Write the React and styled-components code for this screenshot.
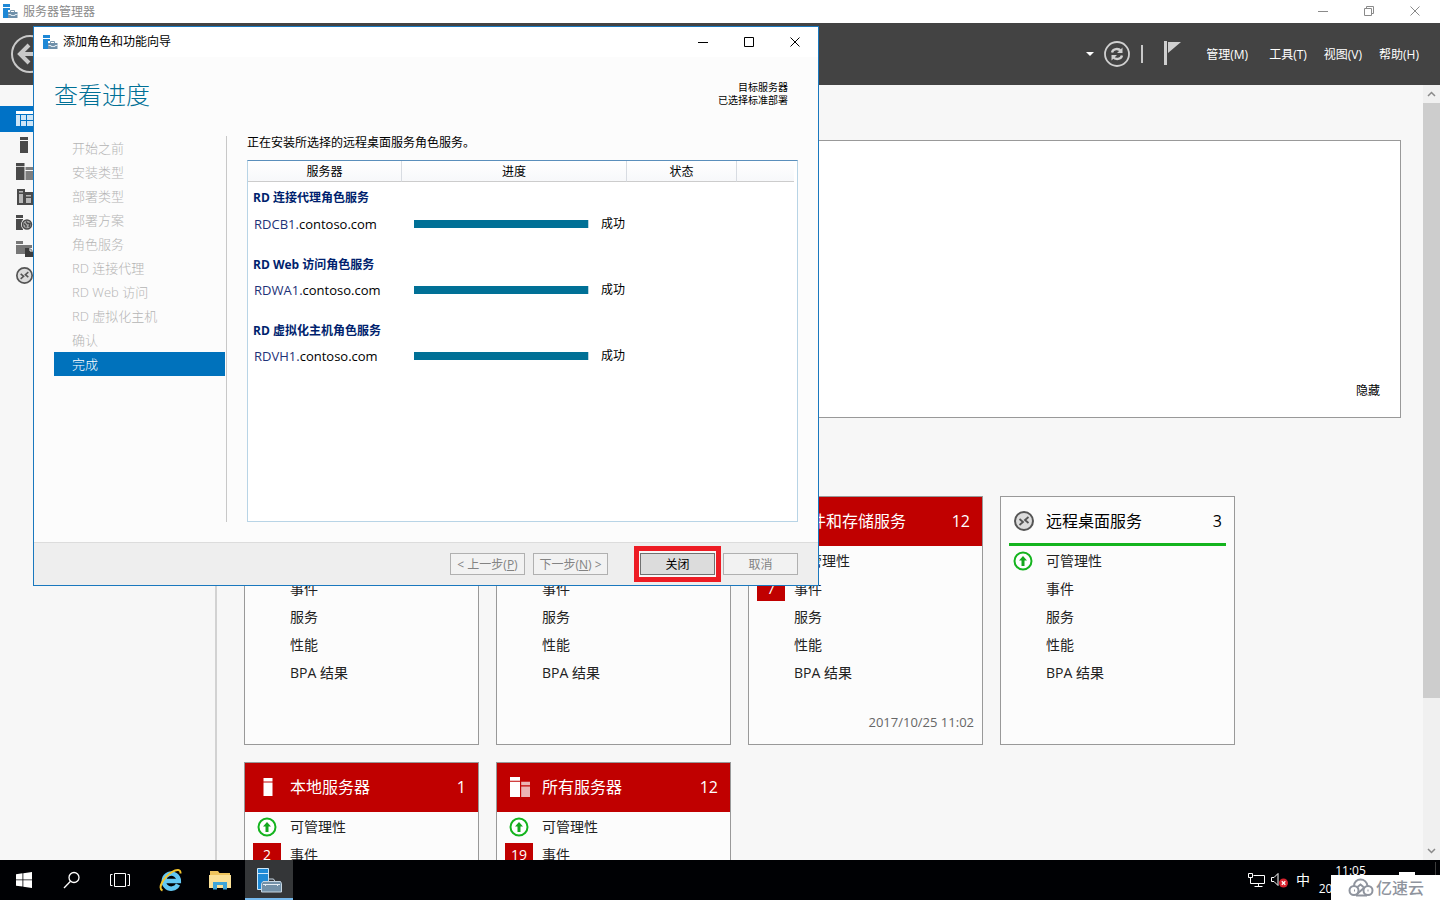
import React from 'react';
import styled, { createGlobalStyle } from 'styled-components';

const GlobalStyle = createGlobalStyle`
  * {
    box-sizing: border-box;
  }

  body {
    margin: 0;
    font-family: "Open Sans", "Noto Sans CJK SC", sans-serif;
    font-size: 12px;
    line-height: 16px;
    color: #000;
  }

  button {
    font: inherit;
    color: inherit;
    padding: 0;
    border: 0;
    background: none;
    white-space: nowrap;
  }

  svg {
    display: block;
    flex: none;
  }
`;

const Desktop = styled.div`
  position: relative;
  display: flex;
  flex-direction: column;
  height: 100vh;
  overflow: hidden;
  background: #f7f7f7;
`;

/* ---------- window chrome ---------- */

const TitleBar = styled.header`
  display: flex;
  align-items: center;
  gap: 5px;
  flex: none;
  height: ${(p) => p.$height}px;
  padding: ${(p) => p.$padding};
  background: #fff;
  color: ${(p) => p.$color};
`;

const TitleText = styled.span`
  flex: 1;
`;

const CaptionButton = styled.button`
  display: flex;
  align-items: center;
  justify-content: center;
  width: 46px;
  height: 100%;
  margin-left: -5px;
`;

const ManagerHeader = styled.div`
  display: flex;
  align-items: center;
  justify-content: space-between;
  flex: none;
  height: 62px;
  padding: 0 21px 0 11px;
  background: #434343;
  color: #fff;
`;

const HeaderTools = styled.div`
  display: flex;
  align-items: center;
`;

const ToolButton = styled.button`
  margin-right: ${(p) => p.$after}px;
`;

const Separator = styled.span`
  width: 2px;
  height: 18px;
  margin-right: 21px;
  background: #c8c8c8;
`;

const Menu = styled.nav`
  display: flex;
  gap: 17px;
  padding-top: 2px;

  button:first-child {
    margin-right: 4px;
  }
`;

/* ---------- server manager body ---------- */

const ManagerBody = styled.div`
  display: flex;
  flex: 1;
  min-height: 0;
`;

const Rail = styled.nav`
  flex: none;
  width: 217px;
  padding-top: 21px;
  border-right: 2px solid #d2d2d2;
`;

const RailItem = styled.button`
  display: flex;
  align-items: center;
  width: 100%;
  height: 26px;
  padding-left: 16px;
  background: ${(p) => (p.$active ? '#0072c6' : 'transparent')};
`;

const Dashboard = styled.main`
  flex: 1;
  min-width: 0;
  padding: 55px 22px 0 27px;
  overflow: hidden;
`;

const WelcomePanel = styled.section`
  display: flex;
  align-items: flex-end;
  justify-content: flex-end;
  min-height: 278px;
  padding: 0 20px 18px;
  margin-bottom: 78px;
  border: 1px solid #999;
  background: #fff;
`;

const Tiles = styled.div`
  display: grid;
  grid-template-columns: repeat(auto-fill, 235px);
  gap: 17px;
`;

const Tile = styled.article`
  display: flex;
  flex-direction: column;
  min-height: 249px;
  border: 1px solid #999;
  background: #fcfcfc;
`;

const TileHead = styled.h2`
  display: flex;
  align-items: center;
  gap: 8px;
  height: 49px;
  margin: 0;
  padding: 0 12px 2px 9px;
  font-size: 16px;
  font-weight: 400;
  line-height: 24px;
  background: ${(p) => (p.$alert ? '#c00000' : 'transparent')};
  color: ${(p) => (p.$alert ? '#fff' : '#000')};
`;

const TileName = styled.span`
  flex: 1;
`;

const HealthBar = styled.div`
  height: 3px;
  margin: -3px 8px 0;
  background: #14b41e;
`;

const TileRows = styled.ul`
  flex: 1;
  margin: 0;
  padding: 1px 8px 0;
  list-style: none;
`;

const TileRow = styled.li`
  display: flex;
  align-items: center;
  gap: 9px;
  height: 28px;
  font-size: 14px;
  line-height: 20px;
  color: #222;
`;

const IconSlot = styled.span`
  display: flex;
  justify-content: center;
  flex: none;
  width: 28px;
`;

const Badge = styled.span`
  flex: none;
  width: 28px;
  height: 24px;
  line-height: 24px;
  text-align: center;
  background: #c00000;
  color: #fff;
`;

const TileDate = styled.time`
  padding: 0 8px 12px;
  text-align: right;
  font-size: 13px;
  line-height: 20px;
  color: #666;
`;

const Scrollbar = styled.div`
  display: flex;
  flex-direction: column;
  align-items: center;
  flex: none;
  width: 17px;
  background: #f0f0f0;
`;

const ScrollArrow = styled.button`
  display: flex;
  align-items: center;
  justify-content: center;
  width: 17px;
  height: 18px;
`;

const ScrollTrack = styled.div`
  flex: 1;
  align-self: stretch;
`;

const ScrollThumb = styled.div`
  height: 80.5%;
  background: #cdcdcd;
`;

/* ---------- wizard ---------- */

const Wizard = styled.section`
  position: absolute;
  left: 33px;
  top: 26px;
  display: flex;
  flex-direction: column;
  width: 786px;
  height: 560px;
  border: 1px solid #1a78be;
  background: #fcfcfc;
`;

const WizardHead = styled.div`
  display: flex;
  justify-content: space-between;
  flex: none;
  height: 79px;
  padding: 22px 30px 0 20px;
`;

const WizardTitle = styled.h1`
  margin: 0;
  font-size: 24px;
  font-weight: 300;
  line-height: 32px;
  color: #007096;
`;

const Destination = styled.p`
  margin: 2px 0 0;
  text-align: right;
  font-size: 10px;
  line-height: 13px;
`;

const WizardBody = styled.div`
  display: flex;
  flex: 1;
  min-height: 0;
  padding: 0 20px;
`;

const Steps = styled.ol`
  flex: none;
  width: 173px;
  margin: 0 20px 20px 0;
  padding: 0 1px 0 0;
  border-right: 1px solid #c8c8c8;
  list-style: none;
`;

const Step = styled.li`
  height: 24px;
  padding-left: 18px;
  font-size: 13px;
  font-weight: 300;
  line-height: 24px;
  background: ${(p) => (p.$active ? '#0072bc' : 'transparent')};
  color: ${(p) => (p.$active ? '#fff' : '#b4b4b4')};
`;

const Results = styled.div`
  display: flex;
  flex-direction: column;
  flex: 1;
  margin-bottom: 20px;
`;

const Summary = styled.p`
  margin: -1px 0 9px;
`;

const TableBox = styled.div`
  flex: 1;
  padding-right: 3px;
  border: 1px solid #b8d4e6;
  border-top-color: #5b8fbc;
  background: #fff;
`;

const Table = styled.table`
  width: 100%;
  table-layout: fixed;
  border-collapse: separate;
  border-spacing: 0;

  th,
  td {
    padding: 0;
    text-align: left;
    font-weight: 400;
  }
`;

const ColumnHead = styled.th`
  && {
    height: 21px;
    padding-top: 2px;
    border-right: ${(p) => (p.$last ? 0 : 1)}px solid #d8dce2;
    border-bottom: 1px solid #ccc;
    background: linear-gradient(#fff, #f7f8fa);
    text-align: center;
  }
`;

const GroupHead = styled.th`
  && {
    height: ${(p) => (p.$first ? 31 : 30)}px;
    padding: 1px 0 0 5px;
    font-weight: 700;
    color: #001f6e;
  }
`;

const ServerCell = styled.td`
  && {
    height: 36px;
    padding: 0 0 14px 6px;
    font-size: 13px;
    line-height: 20px;
    white-space: nowrap;
  }
`;

const HostName = styled.span`
  color: #1e3278;
`;

const ProgressCell = styled.td`
  && {
    padding: 0 0 14px 12px;
    white-space: nowrap;
  }
`;

const ProgressLine = styled.label`
  display: flex;
  align-items: center;
  gap: 12px;
`;

const Progress = styled.progress`
  appearance: none;
  width: 175px;
  height: 8px;
  border: 0;
  border-right: 1px solid #b9d6e2;

  &::-webkit-progress-bar {
    background: #e6e6e6;
  }

  &::-webkit-progress-value {
    background: #007096;
  }
`;

const WizardFooter = styled.footer`
  display: flex;
  align-items: center;
  justify-content: flex-end;
  flex: none;
  height: 43px;
  padding: 0 20px;
  border-top: 1px solid #dcdcdc;
  background: #eee;
`;

const WizardButton = styled.button`
  width: 75px;
  height: 22px;
  padding-top: 1px;
  margin-right: ${(p) => p.$after || 0}px;
  border: 1px solid #707070;
  background: #dcdcdc;
  line-height: 18px;

  &:disabled {
    border-color: #b0b0b0;
    background: #f2f2f2;
    color: #838383;
  }
`;

const Highlight = styled.span`
  display: flex;
  margin-right: 2px;
  padding: 2px 1px;
  border: 5px solid #ed1c24;
  background: #f7f7f7;
`;

/* ---------- taskbar ---------- */

const Taskbar = styled.footer`
  position: relative;
  display: flex;
  flex: none;
  height: 40px;
  background: #000104;
  color: #fff;
`;

const TaskButton = styled.button`
  display: flex;
  align-items: center;
  justify-content: center;
  width: 48px;
  padding-top: 2px;
  margin-right: ${(p) => p.$after || 0}px;
  border-bottom: 2px solid ${(p) => (p.$active ? '#76b9ed' : 'transparent')};
  background: ${(p) => (p.$active ? '#343638' : 'transparent')};
  background-clip: padding-box;
`;

const Tray = styled.div`
  display: flex;
  align-items: center;
  gap: 6px;
  margin-left: auto;
  padding-right: 56px;
`;

const InputMode = styled.button`
  width: 16px;
  font-size: 14px;
`;

const Clock = styled.time`
  width: 67px;
  text-align: center;
  line-height: 18px;
  white-space: nowrap;
`;

const ShowDesktop = styled.span`
  position: absolute;
  right: 4px;
  top: 2px;
  width: 1px;
  height: 36px;
  background: #3c3c3c;
`;

const Notice = styled.span`
  position: absolute;
  right: 25px;
  top: 12px;
  width: 16px;
  height: 12px;
  background: #fff;
`;

const Watermark = styled.div`
  position: absolute;
  right: 0;
  bottom: 0;
  display: flex;
  align-items: center;
  gap: 2px;
  width: 109px;
  height: 25px;
  padding-left: 17px;
  background: #fff;
  color: #8f949e;
  font-size: 16px;
  font-weight: 500;
`;

/* ---------- icons ---------- */

const ManagerIcon = () => (
  <svg width="15" height="15" viewBox="0 0 15 15">
    <path d="M0 0h7v3H0zM0 4h7v2H5v8H0z" fill="#1e88d6" />
    <path d="M7.500 8.500v-2h4v2" fill="none" stroke="#7f9bb0" />
    <path d="M5 8h9.500v6H5z" fill="#6f90aa" />
    <path d="M5.500 10.500h2.500v1h4v-1h2.500" fill="none" stroke="#dbe6ee" />
  </svg>
);

const ManagerTaskIcon = () => (
  <svg width="25" height="25" viewBox="0 0 25 25">
    <path d="M.5.5h11v21H.5z" fill="#1e8ad6" stroke="#cfe8fa" />
    <path d="M1 5.500h10" stroke="#cfe8fa" />
    <path d="M11.500 13v-2h5l1.500 2.500" fill="none" stroke="#c7d6e2" />
    <path d="M6 13.500h17.500l1 2V24h-20v-8.500z" fill="#7391a8" stroke="#c7d6e2" />
    <path d="M6 16.500h17M8.500 16v2M20.500 16v2" stroke="#e6eef4" />
  </svg>
);

const MinimizeIcon = () => (
  <svg width="11" height="11" viewBox="0 0 11 11" stroke="currentColor">
    <path d="M0 5.500h10" />
  </svg>
);

const MaximizeIcon = () => (
  <svg width="11" height="11" viewBox="0 0 11 11" fill="none" stroke="currentColor">
    <path d="M.5.5h9v9h-9z" />
  </svg>
);

const RestoreIcon = () => (
  <svg width="11" height="11" viewBox="0 0 11 11" fill="none" stroke="currentColor">
    <path d="M.5 2.500h7v7h-7zM2.500 2.500v-2h7v7h-2" />
  </svg>
);

const CloseIcon = () => (
  <svg width="11" height="11" viewBox="0 0 11 11" stroke="currentColor">
    <path d="M.5.5l9 9M9.500.5l-9 9" />
  </svg>
);

const BackIcon = () => (
  <svg width="38" height="38" viewBox="0 0 38 38" fill="none" stroke="#c9c9c9">
    <circle cx="19" cy="19" r="18" strokeWidth="2" />
    <path d="M18 10l-9 9 9 9M9.500 19H29" strokeWidth="4" />
  </svg>
);

const RefreshIcon = () => (
  <svg width="26" height="26" viewBox="0 0 26 26" fill="none" stroke="#d0d0d0">
    <circle cx="13" cy="13" r="12" strokeWidth="1.800" />
    <path d="M8 11.500c1-4 6.500-4.500 9-1.500M18 14.500c-1 4-6.500 4.500-9 1.500" strokeWidth="2.400" />
    <path d="M18.500 6.500v5.500h-5.500zM7.500 19.500V14H13z" fill="#d0d0d0" stroke="none" />
  </svg>
);

const FlagIcon = () => (
  <svg width="18" height="27" viewBox="0 0 18 27" fill="#cfcfcf">
    <path d="M0 0h3v24H0zM4 1h13L4 12z" />
  </svg>
);

const DashboardIcon = () => (
  <svg width="17" height="16" viewBox="0 0 17 16" fill="#fff">
    <path d="M0 0h17v3H0z" />
    <path d="M0 4h4v11H0zM5 4h5v5H5zM11 4h6v5h-6zM5 10h5v5H5zM11 10h6v5h-6z" fill="#cfe6f7" />
  </svg>
);

const ServerIcon = ({ color = '#4a4a4a', size = 16 }) => (
  <svg width={size} height={size} viewBox="0 0 16 16" fill={color}>
    <path d="M4 0h8v3H4zM4 4h8v12H4z" />
  </svg>
);

const ServersIcon = ({ color = '#4a4a4a', size = 17 }) => (
  <svg width={size} height={size} viewBox="0 0 17 17" fill={color}>
    <path d="M0 0h8.500v3.200H0zM0 4h8.500v13H0z" />
    <path d="M9.500 4h7.500v3H9.500zM9.500 8h7.500v9H9.500z" opacity=".7" />
  </svg>
);

const BuildingIcon = () => (
  <svg width="17" height="16" viewBox="0 0 17 16">
    <path d="M1 0h8v3h8v13H1z" fill="#4a4a4a" />
    <path d="M3 2h4v1.500H3zM3 5h4v9H3zM10 6h5v1.500h-5zM10 9h5v5h-5z" fill="#b8b8b8" />
  </svg>
);

const GlobeServerIcon = () => (
  <svg width="17" height="16" viewBox="0 0 17 16">
    <path d="M0 0h7v3H0zM0 4h7v11H0z" fill="#4a4a4a" />
    <circle cx="11" cy="9.500" r="6" fill="#f7f7f7" />
    <circle cx="11" cy="9.500" r="4.500" fill="#aaa" stroke="#4a4a4a" strokeWidth="1.500" />
    <path d="M8 8.500l2 2v2M10 6.500l1.500 2h2.500l-1 3.500" fill="none" stroke="#4a4a4a" strokeWidth="1.400" />
  </svg>
);

const FileServerIcon = () => (
  <svg width="17" height="16" viewBox="0 0 17 16">
    <path d="M0 0h7v3H0zM0 4h16v3h-7v6H0z" fill="#777" />
    <path d="M9 7h5l3 3v6H9z" fill="#3c3c3c" />
    <path d="M14 7v3h3" fill="none" stroke="#f7f7f7" />
  </svg>
);

const RemoteIcon = ({ size = 17 }) => (
  <svg width={size} height={size} viewBox="0 0 20 20" fill="none" stroke="#555">
    <circle cx="10" cy="10" r="9" fill="#dcdcdc" strokeWidth="2" />
    <path d="M5.500 8l3.500 3-3.500 3M14.500 6L11 9l3.500 3" strokeWidth="1.800" />
  </svg>
);

const UpIcon = () => (
  <svg width="20" height="20" viewBox="0 0 20 20">
    <circle cx="10" cy="10" r="8.500" fill="#fff" stroke="#14b41e" strokeWidth="2" />
    <path d="M10 5l4 4.500h-2.500V15h-3V9.500H6z" fill="#14a81e" />
  </svg>
);

const Chevron = ({ down }) => (
  <svg width="9" height="6" viewBox="0 0 9 6" fill="none" stroke="#8a8a8a" strokeWidth="1.500">
    <path d={down ? 'M1 1l3.500 3.500L8 1' : 'M1 5l3.500-3.500L8 5'} />
  </svg>
);

const WindowsIcon = () => (
  <svg width="16" height="16" viewBox="0 0 16 16" fill="#fff">
    <path d="M0 2.200l6.500-.9v6.200H0zM7.300 1.200L16 0v7.500H7.300zM0 8.300h6.500v6.300L0 13.700zM7.300 8.300H16V16l-8.700-1.300z" />
  </svg>
);

const SearchIcon = () => (
  <svg width="18" height="18" viewBox="0 0 18 18" fill="none" stroke="#fff" strokeWidth="1.300">
    <circle cx="11" cy="6.500" r="5" />
    <path d="M7.500 10.200L1 17" />
  </svg>
);

const TaskViewIcon = () => (
  <svg width="20" height="16" viewBox="0 0 20 16" fill="none" stroke="#fff">
    <path d="M4.500 1.500h11v13h-11zM2.500 2.500h-2v11h2M17.500 2.500h2v11h-2" />
  </svg>
);

const ExplorerBrowserIcon = () => (
  <svg width="24" height="24" viewBox="0 0 24 24" fill="none">
    <path d="M19 16.500A7.500 7.500 0 1 1 19.800 13H7" stroke="#62c8f4" strokeWidth="4.500" />
    <path d="M3.500 22.500C-2 20 5 9 13 4c4.500-2.800 9-3 8.500 1.500" stroke="#f3c42c" strokeWidth="2" />
  </svg>
);

const FolderIcon = () => (
  <svg width="22" height="19" viewBox="0 0 22 19">
    <path d="M1 0h8l1.500 2H21v15H1z" fill="#eec45c" />
    <path d="M0 4h22v13H0z" fill="#fbe196" />
    <path d="M4 18.500V11h14v7.500h-4V14H8v4.500z" fill="#3ea5d8" />
  </svg>
);

const NetworkIcon = () => (
  <svg width="17" height="15" viewBox="0 0 17 15" fill="none" stroke="#fff">
    <path d="M5.500 2.500h11v8H3.500M10.500 10.500v3M6.500 13.500h8M.5.500h4v4h-4zM2.500 4.500v6h3" />
  </svg>
);

const VolumeIcon = () => (
  <svg width="18" height="16" viewBox="0 0 18 16" fill="none">
    <path d="M.5 5.500h2.500l4-4v12l-4-4H.5z" stroke="#fff" />
    <circle cx="12.500" cy="11" r="4.500" fill="#d8232e" />
    <path d="M10.800 9.200l3.500 3.500M14.300 9.200l-3.500 3.500" stroke="#fff" strokeWidth="1.300" />
  </svg>
);

const CloudIcon = () => (
  <svg width="26" height="19" viewBox="0 0 26 19" fill="none" stroke="#8f949e" strokeWidth="2">
    <path d="M6 8C6 4 9 1.500 12.500 1.500S19 4 19.500 8" />
    <circle cx="6" cy="12.500" r="4.500" />
    <circle cx="20" cy="12.500" r="4.500" />
    <path d="M9 16l7.500-6.500M6 12.500h1M19.500 12.500h1M8 17.500h11M9.500 9l3-2.500 3 2.500" />
  </svg>
);

/* ---------- data ---------- */

const menuItems = ['管理(M)', '工具(T)', '视图(V)', '帮助(H)'];

const railItems = [
  { label: '仪表板', icon: <DashboardIcon /> },
  { label: '本地服务器', icon: <ServerIcon /> },
  { label: '所有服务器', icon: <ServersIcon /> },
  { label: 'AD DS', icon: <BuildingIcon /> },
  { label: 'DNS', icon: <GlobeServerIcon /> },
  { label: '文件和存储服务', icon: <FileServerIcon /> },
  { label: '远程桌面服务', icon: <RemoteIcon /> },
];

const tiles = [
  { id: 'adds', alert: true },
  { id: 'dns', alert: true },
  { id: 'files', name: '文件和存储服务', count: 12, alert: true, events: 7, date: '2017/10/25 11:02' },
  { id: 'rds', name: '远程桌面服务', count: 3, icon: <RemoteIcon size={20} /> },
  { id: 'local', name: '本地服务器', count: 1, alert: true, events: 2, icon: <ServerIcon color="#fff" size={18} /> },
  { id: 'all', name: '所有服务器', count: 12, alert: true, events: 19, icon: <ServersIcon color="#fff" size={20} /> },
];

const steps = [
  '开始之前',
  '安装类型',
  '部署类型',
  '部署方案',
  '角色服务',
  'RD 连接代理',
  'RD Web 访问',
  'RD 虚拟化主机',
  '确认',
  '完成',
];

const roles = [
  { role: 'RD 连接代理角色服务', host: 'RDCB1' },
  { role: 'RD Web 访问角色服务', host: 'RDWA1' },
  { role: 'RD 虚拟化主机角色服务', host: 'RDVH1' },
];

const RoleTile = ({ tile }) => (
  <Tile>
    <TileHead $alert={tile.alert}>
      <IconSlot>{tile.icon}</IconSlot>
      <TileName>{tile.name}</TileName>
      {tile.count}
    </TileHead>
    {!tile.alert && <HealthBar />}
    <TileRows>
      <TileRow><IconSlot><UpIcon /></IconSlot>可管理性</TileRow>
      <TileRow>{tile.events ? <Badge>{tile.events}</Badge> : <IconSlot />}事件</TileRow>
      <TileRow><IconSlot />服务</TileRow>
      <TileRow><IconSlot />性能</TileRow>
      <TileRow><IconSlot />BPA 结果</TileRow>
    </TileRows>
    {tile.date && <TileDate>{tile.date}</TileDate>}
  </Tile>
);

const ProgressTable = () => (
  <Table>
    <colgroup>
      <col width="154" />
      <col width="225" />
      <col width="110" />
      <col />
    </colgroup>
    <thead>
      <tr>
        <ColumnHead>服务器</ColumnHead>
        <ColumnHead>进度</ColumnHead>
        <ColumnHead>状态</ColumnHead>
        <ColumnHead $last />
      </tr>
    </thead>
    <tbody>
      {roles.map(({ role, host }, i) => (
        <React.Fragment key={host}>
          <tr>
            <GroupHead colSpan="4" $first={i === 0}>{role}</GroupHead>
          </tr>
          <tr>
            <ServerCell><HostName>{host}.</HostName>contoso.com</ServerCell>
            <ProgressCell>
              <ProgressLine>
                <Progress value="100" max="100" />
                成功
              </ProgressLine>
            </ProgressCell>
            <td />
            <td />
          </tr>
        </React.Fragment>
      ))}
    </tbody>
  </Table>
);

const AddRolesWizard = () => (
  <Wizard aria-label="添加角色和功能向导">
    <TitleBar $height={30} $padding="0 0 0 9px" $color="#000">
      <ManagerIcon />
      <TitleText>添加角色和功能向导</TitleText>
      <CaptionButton aria-label="最小化"><MinimizeIcon /></CaptionButton>
      <CaptionButton aria-label="最大化"><MaximizeIcon /></CaptionButton>
      <CaptionButton aria-label="关闭窗口"><CloseIcon /></CaptionButton>
    </TitleBar>
    <WizardHead>
      <WizardTitle>查看进度</WizardTitle>
      <Destination>目标服务器<br />已选择标准部署</Destination>
    </WizardHead>
    <WizardBody>
      <Steps>
        {steps.map((step) => (
          <Step key={step} $active={step === '完成'}>{step}</Step>
        ))}
      </Steps>
      <Results>
        <Summary>正在安装所选择的远程桌面服务角色服务。</Summary>
        <TableBox><ProgressTable /></TableBox>
      </Results>
    </WizardBody>
    <WizardFooter>
      <WizardButton disabled $after={8}>&lt; 上一步(<u>P</u>)</WizardButton>
      <WizardButton disabled $after={26}>下一步(<u>N</u>) &gt;</WizardButton>
      <Highlight><WizardButton>关闭</WizardButton></Highlight>
      <WizardButton disabled>取消</WizardButton>
    </WizardFooter>
  </Wizard>
);

const App = () => {
  return (
    <Desktop>
      <GlobalStyle />
      <TitleBar $height={23} $padding="0 2px 0 3px" $color="#8a8a8a">
        <ManagerIcon />
        <TitleText>服务器管理器</TitleText>
        <CaptionButton aria-label="最小化"><MinimizeIcon /></CaptionButton>
        <CaptionButton aria-label="还原"><RestoreIcon /></CaptionButton>
        <CaptionButton aria-label="关闭"><CloseIcon /></CaptionButton>
      </TitleBar>
      <ManagerHeader>
        <button aria-label="后退"><BackIcon /></button>
        <HeaderTools>
          <ToolButton $after={10} aria-label="历史记录">
            <svg width="8" height="4" viewBox="0 0 8 4" fill="#fff"><path d="M0 0h8L4 4z" /></svg>
          </ToolButton>
          <ToolButton $after={11} aria-label="刷新"><RefreshIcon /></ToolButton>
          <Separator />
          <ToolButton $after={24} aria-label="通知"><FlagIcon /></ToolButton>
          <Menu>
            {menuItems.map((item) => (
              <button key={item}>{item}</button>
            ))}
          </Menu>
        </HeaderTools>
      </ManagerHeader>
      <ManagerBody>
        <Rail>
          {railItems.map(({ label, icon }, i) => (
            <RailItem key={label} aria-label={label} $active={i === 0}>{icon}</RailItem>
          ))}
        </Rail>
        <Dashboard>
          <WelcomePanel><button>隐藏</button></WelcomePanel>
          <Tiles>
            {tiles.map((tile) => (
              <RoleTile key={tile.id} tile={tile} />
            ))}
          </Tiles>
        </Dashboard>
        <Scrollbar>
          <ScrollArrow aria-label="向上滚动"><Chevron /></ScrollArrow>
          <ScrollTrack><ScrollThumb /></ScrollTrack>
          <ScrollArrow aria-label="向下滚动"><Chevron down /></ScrollArrow>
        </Scrollbar>
      </ManagerBody>
      <AddRolesWizard />
      <Taskbar>
        <TaskButton aria-label="开始"><WindowsIcon /></TaskButton>
        <TaskButton aria-label="搜索"><SearchIcon /></TaskButton>
        <TaskButton $after={3} aria-label="任务视图"><TaskViewIcon /></TaskButton>
        <TaskButton $after={1} aria-label="浏览器"><ExplorerBrowserIcon /></TaskButton>
        <TaskButton $after={1} aria-label="文件资源管理器"><FolderIcon /></TaskButton>
        <TaskButton $active aria-label="服务器管理器"><ManagerTaskIcon /></TaskButton>
        <Tray>
          <NetworkIcon />
          <VolumeIcon />
          <InputMode>中</InputMode>
          <Clock>11:05<br />2017/10/25</Clock>
        </Tray>
        <ShowDesktop />
        <Notice />
        <Watermark><CloudIcon />亿速云</Watermark>
      </Taskbar>
    </Desktop>
  );
};

export default App;
